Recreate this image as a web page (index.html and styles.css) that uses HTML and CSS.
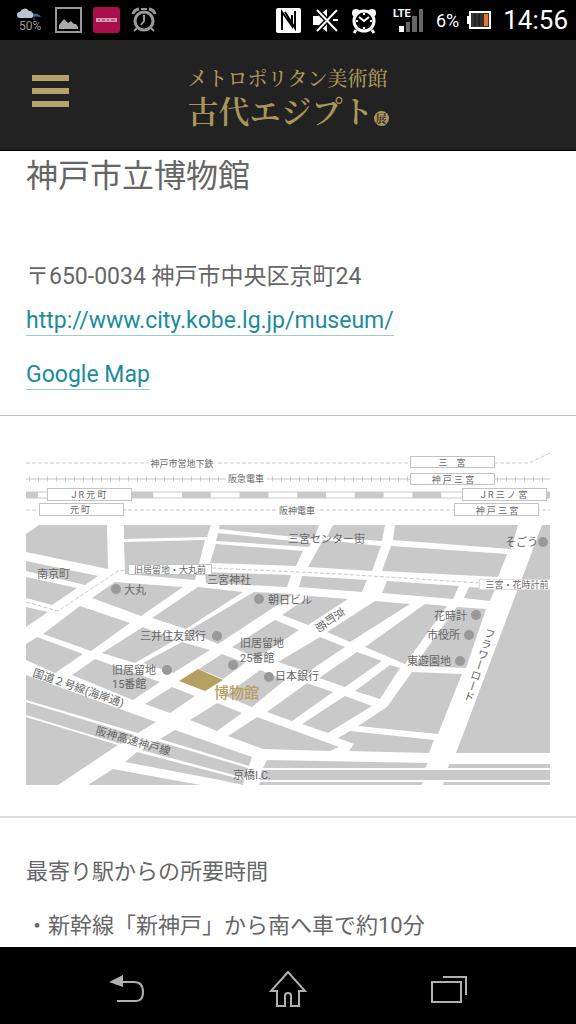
FILE: index.html
```html
<!DOCTYPE html>
<html lang="ja">
<head>
  <meta charset="utf-8">
  <meta name="viewport" content="width=device-width">
  <title>メトロポリタン美術館 古代エジプト展</title>
  <link rel="stylesheet" href="styles.css">
</head>
<body>
  <div class="status">
    <div class="status-left">
      <svg width="28" height="26" viewBox="0 0 28 26">
        <path d="M13 9a7 6 0 0 1 12 1z" fill="#3f668c"/>
        <path d="M18 9v4" stroke="#557" stroke-width="1"/>
        <path d="M4 11a3 3 0 0 1 0-6 5 5 0 0 1 9-1 4 4 0 0 1 3 7z" fill="#b9c6d2"/>
        <text x="3" y="23" class="rain">50%</text>
      </svg>
      <svg width="27" height="26" viewBox="0 0 27 26">
        <rect x="1" y="1" width="25" height="24" fill="none" stroke="#999" stroke-width="2"/>
        <path d="M4 22v-4l5-6 4 4 3-2 3 3h2l2 3v2z" fill="#aaa"/>
      </svg>
      <svg width="27" height="26" viewBox="0 0 27 26">
        <rect width="27" height="26" rx="3" fill="#a90f4b"/>
        <path d="M3 11h21v4H3z" fill="#d8a0b6"/>
        <path d="M5 13h2m2 0h3m2 0h2m2 0h4" stroke="#a90f4b" stroke-width="1"/>
      </svg>
      <svg width="26" height="26" viewBox="0 0 26 26" fill="none" stroke="#999" stroke-width="2">
        <circle cx="13" cy="14" r="9" stroke-width="3"/>
        <path d="M13 8v6l-3 4M6 21l-3 3M20 21l3 3M10 2h6"/>
        <path d="M2 7q1-4 6-5M24 7q-1-4-6-5" stroke-width="3"/>
      </svg>
    </div>
    <div class="status-right">
      <svg width="25" height="25" viewBox="0 0 25 25">
        <rect width="25" height="25" rx="2" fill="#fff"/>
        <path d="M6 22V4l10 14V7M9 4l10 16V3" fill="none" stroke="#000" stroke-width="2"/>
      </svg>
      <svg width="26" height="25" viewBox="0 0 26 25">
        <path d="M0 8h5l9-7v23l-9-7H0z" fill="#fff"/>
        <path d="M4 2l20 21M24 2L4 23" stroke="#000" stroke-width="5"/>
        <path d="M4 2l20 21M24 2L4 23" stroke="#fff" stroke-width="2"/>
        <path d="M20 12h5" stroke="#fff" stroke-width="2"/>
      </svg>
      <svg width="26" height="27" viewBox="0 0 26 27">
        <circle cx="5" cy="6" r="4" fill="#fff"/>
        <circle cx="21" cy="6" r="4" fill="#fff"/>
        <path d="M5 23l-2 3M21 23l2 3" stroke="#fff" stroke-width="3"/>
        <circle cx="13" cy="14" r="10" fill="#000" stroke="#fff" stroke-width="3"/>
        <path d="M8 10l5 4 5-4M13 6v2M13 20v2M5 14h2M19 14h2" fill="none" stroke="#fff" stroke-width="2"/>
      </svg>
      <svg class="signal" width="31" height="28" viewBox="0 0 31 28">
        <text x="0" y="11" class="lte">LTE</text>
        <rect x="6" y="20" width="5" height="6" fill="#fff"/>
        <rect x="13" y="16" width="4" height="10" fill="#666"/>
        <rect x="19" y="10" width="5" height="16" fill="#666"/>
        <rect x="26" y="3" width="4" height="23" fill="#666"/>
      </svg>
      <span class="percent">6%</span>
      <svg width="24" height="18" viewBox="0 0 24 18">
        <path d="M0 5h2v8H0z" fill="#fff"/>
        <rect x="3" y="1" width="20" height="16" fill="#333" stroke="#fff" stroke-width="2"/>
        <path d="M8 3v12M12 3v12" stroke="#111"/>
        <path d="M17 3h4v12h-4z" fill="#e8762c"/>
      </svg>
      <span class="clock">14:56</span>
    </div>
  </div>

  <header class="header">
    <button class="menu" aria-label="メニュー"><span></span><span></span><span></span></button>
    <a class="logo" href="#">
      <span class="logo-top">メトロポリタン美術館</span>
      <span class="logo-main">古代エジプト<span class="logo-mark">展</span></span>
    </a>
  </header>

  <main class="main">
    <section class="place">
      <h1>神戸市立博物館</h1>
      <p class="address">〒650-0034 神戸市中央区京町24</p>
      <p class="link"><a href="#">http://www.city.kobe.lg.jp/museum/</a></p>
      <p class="link"><a href="#">Google Map</a></p>
    </section>

    <section class="map">
      <svg viewBox="26 446 524 345">
        <!-- 街区 -->
        <g class="block">
          <path d="M26 534L39 525H107L108 569L26 552z"/>
          <path d="M124 525H211L207 537L124 539z"/>
          <path d="M124 542L205 540L195 580L125 574z"/>
          <path d="M220 525H319L314 539L219 529z"/>
          <path d="M218 533L311 543L309 547L216 541z"/>
          <path d="M216 544L303 551L296 566L210 563z"/>
          <path d="M333 525H385L382 541L327 537z"/>
          <path d="M323 540L381 546L372 571L308 567z"/>
          <path d="M395 525H518L511 549L393 540z"/>
          <path d="M391 546L507 554L498 577L382 571z"/>
          <path d="M542 525H550V753H456z"/>
          <path d="M205 572L291 575L287 587L206 583z"/>
          <path d="M302 576L367 580L362 592L299 587z"/>
          <path d="M387 581L459 586L453 599L382 593z"/>
          <path d="M469 587L495 589L490 601L464 598z"/>
          <path d="M26 561L98 576L85 585L26 571z"/>
          <path d="M26 577L77 588L52 605L26 598z"/>
          <path d="M26 607L48 612L26 627z"/>
          <path d="M115 582L183 587L141 616L92 598z"/>
          <path d="M80 606L130 623L91 651L43 634z"/>
          <path d="M26 644L37 637L83 654L55 673L26 660z"/>
          <path d="M95 659L160 682L133 700L72 675z"/>
          <path d="M198 587L243 592L186 629L152 618z"/>
          <path d="M143 627L175 640L135 663L102 653z"/>
          <path d="M182 642L210 650L173 673L143 663z"/>
          <path d="M172 687L195 696L170 713L145 704z"/>
          <path d="M222 654L245 663L223 679L199 669z"/>
          <path d="M217 703L242 713L217 731L190 720z"/>
          <path d="M254 592L294 594L218 644L188 631z"/>
          <path d="M275 620L299 630L257 658L232 647z"/>
          <path d="M260 670L285 680L252 707L225 696z"/>
          <path d="M310 596L348 599L308 625L282 615z"/>
          <path d="M375 601L410 604L350 642L327 632z"/>
          <path d="M425 604L447 606L405 664L365 647z"/>
          <path d="M457 607L486 609L466 668L414 666z"/>
          <path d="M320 637L345 647L308 672L278 662z"/>
          <path d="M357 652L382 661L345 687L319 678z"/>
          <path d="M390 665L400 668L380 699L355 691z"/>
          <path d="M307 683L333 692L292 721L267 712z"/>
          <path d="M345 696L372 706L328 733L302 724z"/>
          <path d="M412 672L462 674L438 734L358 726L387 707z"/>
          <path d="M350 731L434 740L429 753L349 751L354 744L338 738z"/>
          <path d="M257 717L339 747L330 751L263 749L228 736z"/>
          <path d="M26 675L156 722L138 733L26 700z"/>
          <path d="M26 702L134 735L121 744L26 715z"/>
          <path d="M26 717L118 745L58 785H26z"/>
          <path d="M175 730L252 757L249 766L160 739z"/>
          <path d="M157 741L248 768L245 778L141 750z"/>
          <path d="M137 752L244 780L243 785L220 780L125 762z"/>
          <path d="M113 769L200 785H88z"/>
          <path d="M267 760L428 763L425 768H263z"/>
          <path d="M449 764H550V768H448z"/>
          <path d="M262 770H550V780H260z"/>
          <path d="M260 782H423L421 785H259z"/>
          <path d="M444 782H550V785H443z"/>
        </g>
        <path d="M198 669L223 680L205 691L179 681z" fill="#b5a061"/>

        <!-- 鉄道 -->
        <g fill="none" stroke="#c9c9c9">
          <path d="M26 463H529L550 453" stroke-dasharray="4 2"/>
          <path d="M26 479H550"/>
          <path d="M29 479H550" stroke-width="5" stroke-dasharray="1 8"/>
          <path d="M26 495H550" stroke-width="7"/>
          <path d="M38 495H470" stroke="#fff" stroke-width="5" stroke-dasharray="28.8 28.8"/>
          <path d="M26 510H550" stroke-dasharray="4 2"/>
          <path d="M26 602L58 611L118 571L128 570M212 568L340 574L480 583" stroke-dasharray="4 2"/>
        </g>
        <g fill="#fff" stroke="#c4c4c4">
          <rect x="47.5" y="488.5" width="84" height="12"/>
          <rect x="39.5" y="503.5" width="84" height="12"/>
          <rect x="410.5" y="456.5" width="84" height="11"/>
          <rect x="410.5" y="473.5" width="84" height="11"/>
          <rect x="462.5" y="488.5" width="84" height="12"/>
          <rect x="454.5" y="503.5" width="84" height="12"/>
          <rect x="128.5" y="564.5" width="83" height="10"/>
          <rect x="479.5" y="579.5" width="71" height="10" stroke="#ddd"/>
        </g>
        <g fill="#fff">
          <path d="M148 457h69v12h-69zM226 473h41v12h-41zM277 504h40v12h-40z"/>
        </g>

        <!-- 目印 -->
        <g fill="#999">
          <circle cx="543" cy="542" r="5"/>
          <circle cx="116" cy="589" r="5"/>
          <circle cx="259" cy="599" r="5"/>
          <circle cx="217" cy="636" r="5"/>
          <circle cx="233" cy="665" r="5"/>
          <circle cx="167" cy="670" r="5"/>
          <circle cx="269" cy="677" r="5"/>
          <circle cx="476" cy="615" r="5"/>
          <circle cx="469" cy="635" r="5"/>
          <circle cx="460" cy="661" r="5"/>
        </g>

        <g class="rail-name">
          <text x="182" y="467">神戸市営地下鉄</text>
          <text x="246" y="482">阪急電車</text>
          <text x="297" y="514">阪神電車</text>
          <text x="89" y="498">J R 元 町</text>
          <text x="80" y="513">元 町</text>
          <text x="452" y="466">三　宮</text>
          <text x="453" y="483">神 戸 三 宮</text>
          <text x="504" y="498">J R 三 ノ 宮</text>
          <text x="497" y="514">神 戸 三 宮</text>
          <text x="170" y="573">旧居留地・大丸前</text>
          <text x="517" y="588">三宮・花時計前</text>
        </g>
        <g class="spot">
          <text x="288" y="543">三宮センター街</text>
          <text x="505" y="546">そごう</text>
          <text x="37" y="578">南京町</text>
          <text x="124" y="594">大丸</text>
          <text x="207" y="584">三宮神社</text>
          <text x="268" y="604">朝日ビル</text>
          <text x="140" y="640">三井住友銀行</text>
          <text x="240" y="647">旧居留地</text>
          <text x="240" y="662">25番館</text>
          <text x="112" y="674">旧居留地</text>
          <text x="112" y="688">15番館</text>
          <text x="275" y="680">日本銀行</text>
          <text x="434" y="620">花時計</text>
          <text x="427" y="639">市役所</text>
          <text x="407" y="665">東遊園地</text>
          <text x="233" y="779">京橋I.C.</text>
          <text transform="translate(32 676) rotate(19)">国道２号線(海岸通)</text>
          <text transform="translate(95 734) rotate(16)">阪神高速神戸線</text>
          <text class="vertical" transform="translate(490 628) rotate(18)">フラワーロード</text>
          <text class="vertical" transform="translate(343 609) rotate(55)">京町筋</text>
        </g>
        <text class="museum" x="214" y="698">博物館</text>
      </svg>
    </section>

    <section class="access">
      <h2>最寄り駅からの所要時間</h2>
      <p>・新幹線「新神戸」から南へ車で約10分</p>
    </section>
  </main>

  <nav class="navbar">
    <button aria-label="戻る">
      <svg width="36" height="30" viewBox="0 0 36 30">
        <path d="M13 8h12q9 0 9 10t-9 9H8" fill="none" stroke="#b0b0b0" stroke-width="2"/>
        <path d="M0 8l14-7v12z" fill="#b0b0b0"/>
      </svg>
    </button>
    <button aria-label="ホーム">
      <svg width="38" height="38" viewBox="0 0 38 38" fill="none" stroke="#b0b0b0" stroke-width="2">
        <path d="M19 2L2 21h6v15h8V26q0-3 3-3t3 3v10h8V21h6z"/>
      </svg>
    </button>
    <button aria-label="アプリ履歴">
      <svg width="36" height="30" viewBox="0 0 36 30" fill="none" stroke="#b0b0b0" stroke-width="2">
        <path d="M1 8h29v20H1zM12 3h23v18"/>
      </svg>
    </button>
  </nav>
</body>
</html>
```
FILE: styles.css
```css
* {
  box-sizing: border-box;
}
body {
  display: flex;
  flex-direction: column;
  height: 100vh;
  margin: 0;
  background: #fff;
  color: #666;
  font-family: Roboto, "Noto Sans CJK JP", sans-serif;
  font-size: 22px;
}
h1, h2, p {
  margin: 0;
  font-weight: normal;
}
button {
  padding: 0;
  border: none;
  background: none;
  cursor: pointer;
}
svg {
  display: block;
}

/* ステータスバー */
.status {
  display: flex;
  flex: none;
  justify-content: space-between;
  align-items: center;
  height: 40px;
  padding: 0 8px 0 16px;
  background: #000;
  color: #fff;
}
.status-left,
.status-right {
  display: flex;
  align-items: center;
}
.status-left {
  gap: 11px;
}
.status-right {
  gap: 12px;
}
.signal {
  margin-left: 4px;
}
.rain {
  fill: #999;
  font-size: 12px;
}
.lte {
  fill: #fff;
  font-size: 11px;
  font-weight: bold;
}
.percent {
  font-size: 18px;
}
.status-right .percent + svg {
  margin-left: -4px;
}
.clock {
  font-size: 26px;
}

/* ヘッダー */
.header {
  display: grid;
  grid-template-columns: 1fr auto 1fr;
  flex: none;
  align-items: center;
  height: 111px;
  padding: 0 32px;
  border-bottom: 1px solid #000;
  background: #222;
}
.menu {
  display: flex;
  flex-direction: column;
  gap: 7px;
  width: 37px;
  margin-bottom: 8px;
}
.menu span {
  height: 6px;
  background: #b5a16a;
}
.logo {
  color: #ab965a;
  font-family: "Noto Serif CJK JP", "Noto Sans CJK JP", serif;
  text-decoration: none;
}
.logo-top,
.logo-main {
  display: block;
}
.logo-top {
  font-size: 20px;
  font-weight: 500;
  line-height: 29px;
}
.logo-main {
  font-size: 31px;
  font-weight: 600;
  line-height: 36px;
}
.logo-mark {
  display: inline-block;
  width: 15px;
  height: 15px;
  border-radius: 50%;
  background: #ab965a;
  color: #222;
  font-size: 11px;
  line-height: 15px;
  text-align: center;
}

/* 本文 */
.main {
  flex: 1;
  min-height: 0;
  overflow: hidden;
}
.place {
  padding: 0 26px 20px;
  border-bottom: 1px solid #bbb;
}
h1 {
  margin-bottom: 60px;
  font-size: 32px;
  line-height: 50px;
}
.address {
  margin-bottom: 8px;
  font-size: 23px;
  line-height: 32px;
}
.link {
  line-height: 40px;
}
.link + .link {
  margin-top: 14px;
}
.link a {
  padding-bottom: 1px;
  border-bottom: 1px solid #9cc;
  color: #1a8c9e;
  font-size: 23px;
  text-decoration: none;
}

/* 地図 */
.map {
  padding: 30px 26px 25px;
  border-bottom: 2px solid #ddd;
}
.block {
  fill: #c9c9c9;
}
.map text {
  fill: #666;
}
.spot {
  font-size: 11px;
}
.rail-name {
  font-size: 9px;
  text-anchor: middle;
}
.vertical {
  writing-mode: vertical-rl;
}
.map .museum {
  fill: #b5a061;
  font-size: 15px;
  font-weight: 500;
}

/* アクセス */
.access {
  padding: 37px 26px 0;
}
h2 {
  margin-bottom: 20px;
  font-size: 22px;
  line-height: 34px;
}
.access p {
  line-height: 34px;
}

/* ナビゲーション */
.navbar {
  display: flex;
  flex: none;
  justify-content: center;
  align-items: center;
  gap: 124px;
  height: 77px;
  padding-top: 6px;
  background: #000;
}
```
